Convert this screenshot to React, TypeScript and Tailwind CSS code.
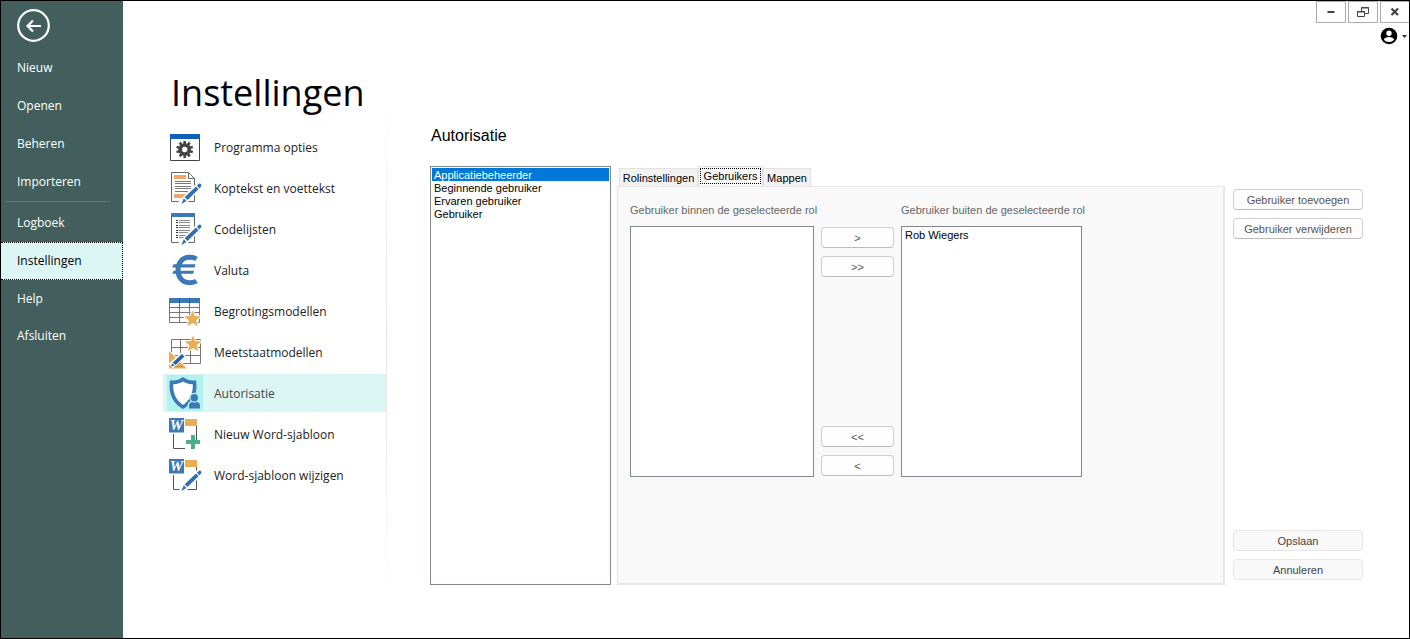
import { useState, type ReactNode } from 'react'
import clsx from 'clsx'

const mainMenu = ['Nieuw', 'Openen', 'Beheren', 'Importeren']
const toolMenu = ['Logboek', 'Instellingen', 'Help', 'Afsluiten']
const roles = ['Applicatiebeheerder', 'Beginnende gebruiker', 'Ervaren gebruiker', 'Gebruiker']
const tabs = [
  { label: 'Rolinstellingen', width: 'w-[79px]' },
  { label: 'Gebruikers', width: 'w-[65px]' },
  { label: 'Mappen', width: 'w-12' },
]

function Icon({ children }: { children: ReactNode }) {
  return (
    <svg viewBox="0 0 36 36" className="h-9 w-9 shrink-0" fill="none" aria-hidden="true">
      {children}
    </svg>
  )
}

function Pencil() {
  return (
    <g>
      <path d="M34 14 14 34" stroke="#fff" strokeWidth="7" />
      <path d="M30 15.5 32 13.7Q33.4 13.2 34.2 14.4 34.8 15.4 34 16.5L32.2 18.5Z" fill="#2f6fb3" />
      <path d="M29 16.5 31.5 19.2 20.5 30 17.6 27.2Z" fill="#2f6fb3" />
      <path d="M16.8 28.2 19.5 31 14.3 34Z" fill="#2f6fb3" />
    </g>
  )
}

function Star({ cx, cy }: { cx: number; cy: number }) {
  return (
    <path
      transform={`translate(${cx} ${cy})`}
      d="M0-8.6 2.2-2.9 8.4-2.6 3.6 1.3 5.2 7.3 0 3.9-5.2 7.3-3.6 1.3-8.4-2.6-2.2-2.9Z"
      fill="#e8ae55"
      stroke="#fff"
      strokeWidth="2"
      paintOrder="stroke"
    />
  )
}

function WordPage() {
  return (
    <g>
      <path d="M6.5 18v14.5H18M29.5 9v15" stroke="#555" />
      <path d="M18 3h12v7H18z" fill="#e8ae55" />
      <path d="M2 2h15v14.5H2z" fill="#3b78b5" />
      <text x="9.5" y="14" textAnchor="middle" fill="#fff" fontSize="15" fontWeight="700" fontStyle="italic" fontFamily="Liberation Serif, serif">
        W
      </text>
    </g>
  )
}

const gearTeeth = [0, 36, 72, 108, 144, 180, 216, 252, 288, 324]

const categories = [
  {
    label: 'Programma opties',
    icon: (
      <Icon>
        <path d="M3.5 6v25.5h29V6" stroke="#444" />
        <path d="M3 5h30v5H3z" fill="#1060b8" />
        <circle cx="17.7" cy="20.5" r="4.5" stroke="#444" strokeWidth="3.6" />
        {gearTeeth.map(a => (
          <path key={a} d="M16.4 12h2.6v3h-2.6z" fill="#444" transform={`rotate(${a} 17.7 20.5)`} />
        ))}
      </Icon>
    ),
  },
  {
    label: 'Koptekst en voettekst',
    icon: (
      <Icon>
        <path d="M4.5 2.5h17l6 6v23h-23zM21.5 2.5v6h6" stroke="#666" />
        <path d="M7 5h12v4H7zM7 24h12v4H7z" fill="#f4a468" />
        <path d="M8 11.5h16M8 13.5h16M8 16.5h16M8 18.5h16M8 21.5h13" stroke="#777" />
        <Pencil />
      </Icon>
    ),
  },
  {
    label: 'Codelijsten',
    icon: (
      <Icon>
        <path d="M4.5 5v26.5h23V5" stroke="#666" />
        <path d="M4 2h24v4H4z" fill="#3b78b5" />
        <path d="M9 9.5h2M9 11.5h2M9 14.5h2M9 16.5h2M9 19.5h2M9 21.5h2M9 24.5h2M9 26.5h2" stroke="#333" />
        <path d="M12 9.5h11M12 11.5h11M12 14.5h11M12 16.5h11M12 19.5h11M12 21.5h9M12 24.5h7M12 26.5h5" stroke="#888" />
        <Pencil />
      </Icon>
    ),
  },
  {
    label: 'Valuta',
    icon: (
      <Icon>
        <path d="M29.5 7Q27 5.3 22.5 5.3C15 5.3 11 11 11 18S15 30.7 22.5 30.7Q27 30.7 29.5 29" stroke="#3b78b5" strokeWidth="5" />
        <path d="M6.5 12.3H28.5L27.7 15.5H5.3ZM6.5 18.7H27L26.2 21.8H5.3Z" fill="#3b78b5" />
      </Icon>
    ),
  },
  {
    label: 'Begrotingsmodellen',
    icon: (
      <Icon>
        <path d="M2.5 10v19.5h30V10M2.5 14.5h30M2.5 19.5h30M2.5 24.5h30M12.5 10v19.5M22.5 10v19.5" stroke="#777" />
        <path d="M2 5h31v5H2z" fill="#3b78b5" />
        <path d="M12.5 5v5M22.5 5v5" stroke="#245a92" />
        <Star cx={25.5} cy={26} />
      </Icon>
    ),
  },
  {
    label: 'Meetstaatmodellen',
    icon: (
      <Icon>
        <path d="M4.5 5.5h29v24h-29zM4.5 13.5h29M4.5 21.5h29M13.5 5.5v24M23.5 5.5v24" stroke="#777" />
        <path d="M2 17v17.5h18z" fill="#e8ae55" stroke="#fff" strokeWidth="2" paintOrder="stroke" />
        <path d="M8 32.5h1M10 32.5h1M12 32.5h1M14 32.5h1" stroke="#8a6a30" />
        <path d="M17 20 4 32" stroke="#fff" strokeWidth="6" />
        <path d="M15 20 17.5 22.5 8.5 31 5.8 28.5ZM5.3 29.2 7.7 31.5 4 32.5Z" fill="#2563a8" />
        <Star cx={26} cy={10} />
      </Icon>
    ),
  },
  {
    label: 'Autorisatie',
    icon: (
      <Icon>
        <path d="M0 0h36v36H0z" fill="#b2f2ee" />
        <path
          d="M16 4.3Q11 8 4.5 7.3 3 24 16 32 29 24 27.5 7.3 21 8 16 4.3Z"
          fill="#fff"
          stroke="#3b78b5"
          strokeWidth="3.6"
        />
        <circle cx="27.3" cy="22.8" r="5" fill="#b2f2ee" />
        <path d="M20.5 34.5V30Q21 25.5 27.5 25.5T34.5 30V34.5Z" fill="#b2f2ee" />
        <circle cx="27.3" cy="22.8" r="3.7" fill="#3b78b5" />
        <path d="M22 33.5V31Q22 27.5 25 27 27.5 28.6 30 27 33 27.5 33 31V33.5Z" fill="#3b78b5" />
      </Icon>
    ),
  },
  {
    label: 'Nieuw Word-sjabloon',
    icon: (
      <Icon>
        <WordPage />
        <path d="M24 19h4v5h5v4h-5v5h-4v-5h-5v-4h5z" fill="#4bae88" />
      </Icon>
    ),
  },
  {
    label: 'Word-sjabloon wijzigen',
    icon: (
      <Icon>
        <WordPage />
        <path d="M18 32.5h11.5V23" stroke="#555" />
        <Pencil />
      </Icon>
    ),
  },
]

function WindowButton({ label, last, children }: { label: string; last?: boolean; children: ReactNode }) {
  return (
    <button
      aria-label={label}
      className={clsx('flex h-[22px] items-center justify-center border border-[#ababab] bg-white', last ? 'w-[29px] border-r-0' : 'w-[30px]')}
    >
      <svg viewBox="0 0 12 12" className="h-3 w-3" fill="none" stroke="#444">
        {children}
      </svg>
    </button>
  )
}

function PushButton({ flat, children }: { flat?: boolean; children: ReactNode }) {
  return (
    <button
      className={clsx(
        'h-[21px] w-full rounded-[4px] border pt-px text-center leading-[18px]',
        flat ? 'border-[#e6e6e6] bg-[#f9f9f9] text-[#444]' : 'border-[#d0d0d0] border-b-[#bbb] bg-[#fdfdfd] text-[#555]',
      )}
    >
      {children}
    </button>
  )
}

function SideItem({ label, active, onClick }: { label: string; active: boolean; onClick: () => void }) {
  return (
    <button
      onClick={onClick}
      className={clsx(
        'block h-[38px] w-full pl-4 text-left last:h-9',
        active ? 'border border-l-0 border-dotted border-black bg-[#dcf5f5] text-black' : 'text-white',
      )}
    >
      {label}
    </button>
  )
}

export default function App() {
  const [page, setPage] = useState('Instellingen')
  const [category, setCategory] = useState('Autorisatie')
  const [role, setRole] = useState('Applicatiebeheerder')
  const [tab, setTab] = useState('Gebruikers')

  return (
    <div className="flex min-h-screen border border-black bg-white font-['Open_Sans',sans-serif] text-xs text-black">
      {/* Backstage menu */}
      <aside className="w-[122px] shrink-0 bg-[#425f5d]">
        <button aria-label="Terug" className="mt-2 ml-4 block">
          <svg viewBox="0 0 33 33" className="h-[33px] w-[33px]" fill="none" stroke="#fff">
            <circle cx="16.5" cy="16.5" r="15.3" strokeWidth="2.2" />
            <path d="M24 17H11M16 11.5 10.5 17 16 22.5" strokeWidth="2.2" />
          </svg>
        </button>
        <nav className="mt-[7px]">
          {mainMenu.map(item => (
            <SideItem key={item} label={item} active={page === item} onClick={() => setPage(item)} />
          ))}
          <hr className="mr-3 mb-[2px] ml-[5px] border-[#6b7271]" />
          {toolMenu.map(item => (
            <SideItem key={item} label={item} active={page === item} onClick={() => setPage(item)} />
          ))}
        </nav>
      </aside>

      <div className="flex min-w-0 flex-1 flex-col">
        {/* Window controls */}
        <header className="flex flex-col items-end">
          <div className="flex gap-[2px]">
            <WindowButton label="Minimaliseren">
              <path d="M2.5 6h7" strokeWidth="2" />
            </WindowButton>
            <WindowButton label="Verkleinen">
              <path d="M4.5 5V1.5h7v6H8M4 2h8M.5 5.5h7v5h-7zM0 6h8" />
            </WindowButton>
            <WindowButton label="Sluiten" last>
              <path d="M2.5 2.5l6.500 6.500M9 2.500L2.500 9" strokeWidth="2.2" />
            </WindowButton>
          </div>
          <button aria-label="Account" className="mt-1 flex items-center gap-1 pr-[2px]">
            <svg viewBox="0 0 18 18" className="h-[18px] w-[18px]">
              <circle cx="9" cy="9" r="8.3" />
              <circle cx="9" cy="6.2" r="2.7" fill="#fff" />
              <path d="M3.8 12.5Q5 9.9 9 9.9T14.2 12.5Q12.5 15 9 15T3.8 12.5Z" fill="#fff" />
            </svg>
            <svg viewBox="0 0 5 3" className="h-[3px] w-[5px]">
              <path d="M0 0h5L2.5 3z" fill="#333" />
            </svg>
          </button>
        </header>

        <div className="flex flex-1">
          {/* Setting categories */}
          <section className="ml-10 w-[223px] shrink-0">
            <h1 className="mt-5 ml-2 text-[36px] leading-[56px]">Instellingen</h1>
            <nav className="mt-[7px] flex flex-col gap-[3px]">
              {categories.map(({ label, icon }) => (
                <button
                  key={label}
                  onClick={() => setCategory(label)}
                  className={clsx(
                    'flex h-[38px] items-center gap-[11px] pl-1 text-left',
                    category === label ? 'bg-[#dcf5f5] text-[#444]' : 'text-[#222]',
                  )}
                >
                  {icon}
                  <span className="pt-[2px]">{label}</span>
                </button>
              ))}
            </nav>
          </section>
          <div className="mt-12 mb-9 w-px bg-linear-to-b from-white via-[#e4e4e4] to-white" />

          {/* Authorisation */}
          <main className="mr-[46px] mb-[53px] ml-[43px] flex min-w-0 flex-1 flex-col font-['Liberation_Sans',Arial,sans-serif] text-[11px]">
            <h2 className="mt-[81px] ml-px text-base leading-5">Autorisatie</h2>
            <div className="mt-5 flex flex-1">
              <div role="listbox" aria-label="Rollen" className="w-[181px] shrink-0 border border-[#828790] p-px">
                {roles.map(r => (
                  <button
                    key={r}
                    role="option"
                    aria-selected={role === r}
                    onClick={() => setRole(r)}
                    className={clsx('block h-[13px] w-full pl-[2px] text-left leading-[14px]', role === r && 'bg-[#0078d7] text-white')}
                  >
                    {r}
                  </button>
                ))}
              </div>

              <div className="ml-[6px] flex min-w-0 flex-1 flex-col">
                <div role="tablist" className="flex h-5 items-end pl-[2px]">
                  {tabs.map(({ label, width }) => (
                    <button
                      key={label}
                      role="tab"
                      aria-selected={tab === label}
                      onClick={() => setTab(label)}
                      className={clsx(
                        'border border-b-0 border-[#e2e2e2] px-px whitespace-nowrap',
                        width,
                        tab === label ? 'h-5 bg-[#f9f9f9] pb-px' : 'h-[18px] bg-[#f2f2f2]',
                      )}
                    >
                      <span className={clsx('block leading-4', tab === label && 'border border-dotted border-black leading-[14px]')}>{label}</span>
                    </button>
                  ))}
                </div>
                <div role="tabpanel" className="flex-1 border border-r-2 border-b-2 border-[#e6e6e6] bg-[#f9f9f9] pt-4 pl-3">
                  <div className="flex gap-[7px]">
                    <div className="w-[184px]">
                      <h3 className="h-[23px] leading-[15px] whitespace-nowrap text-[#666]">Gebruiker binnen de geselecteerde rol</h3>
                      <div role="listbox" aria-label="Gebruiker binnen de geselecteerde rol" className="h-[251px] border border-[#828790] bg-white" />
                    </div>
                    <div className="mt-6 flex h-[249px] w-[73px] flex-col gap-2">
                      <PushButton>&gt;</PushButton>
                      <PushButton>&gt;&gt;</PushButton>
                      <div className="flex-1" />
                      <PushButton>&lt;&lt;</PushButton>
                      <PushButton>&lt;</PushButton>
                    </div>
                    <div className="w-[181px]">
                      <h3 className="h-[23px] leading-[15px] whitespace-nowrap text-[#666]">Gebruiker buiten de geselecteerde rol</h3>
                      <div role="listbox" aria-label="Gebruiker buiten de geselecteerde rol" className="h-[251px] border border-[#828790] bg-white py-[2px]">
                        <button role="option" aria-selected={false} className="block w-full pl-[3px] text-left leading-[13px]">
                          Rob Wiegers
                        </button>
                      </div>
                    </div>
                  </div>
                </div>
              </div>

              <div className="mt-[23px] mb-[5px] ml-2 flex w-[130px] shrink-0 flex-col gap-2">
                <PushButton>Gebruiker toevoegen</PushButton>
                <PushButton>Gebruiker verwijderen</PushButton>
                <div className="flex-1" />
                <PushButton flat>Opslaan</PushButton>
                <PushButton flat>Annuleren</PushButton>
              </div>
            </div>
          </main>
        </div>
      </div>
    </div>
  )
}
